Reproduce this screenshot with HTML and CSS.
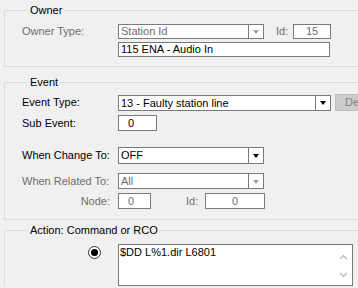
FILE: index.html
```html
<!DOCTYPE html>
<html lang="en">
  <head>
    <meta charset="UTF-8" />
    <title>Event Action</title>
    <link rel="stylesheet" href="styles.css">
  </head>
  <body>
    <fieldset class="group owner">
      <legend>Owner</legend>
      <div class="row">
        <span class="lbl dis">Owner Type:</span>
        <div class="combo dis w146">Station Id<span class="drop"><i class="arrow"></i></span></div>
        <span class="idlbl dis owner-id">Id:</span>
        <div class="box dis num w38">15</div>
      </div>
      <div class="row r2">
        <span class="lbl"></span>
        <div class="box w212">115 ENA - Audio In</div>
      </div>
    </fieldset>

    <fieldset class="group event">
      <legend>Event</legend>
      <div class="row">
        <span class="lbl">Event Type:</span>
        <div class="combo w213 h16">13 - Faulty station line<span class="drop"><i class="arrow"></i></span></div>
        <button class="btn" disabled>De</button>
      </div>
      <div class="row sub">
        <span class="lbl">Sub Event:</span>
        <div class="box w39 h16 pad0">0</div>
      </div>
      <div class="row change">
        <span class="lbl">When Change To:</span>
        <div class="combo w146 h17">OFF<span class="drop"><i class="arrow"></i></span></div>
      </div>
      <div class="row related">
        <span class="lbl dis">When Related To:</span>
        <div class="combo dis w146 h16">All<span class="drop"><i class="arrow"></i></span></div>
      </div>
      <div class="row node">
        <span class="lbl dis right">Node:</span>
        <div class="box dis w33 h16 pad0">0</div>
        <span class="idlbl dis node-id">Id:</span>
        <div class="box dis num w60 h16">0</div>
      </div>
    </fieldset>

    <fieldset class="group action">
      <legend>Action: Command or RCO</legend>
      <div class="row">
        <span class="lbl radio-cell"><span class="radio"></span></span>
        <div class="memo">
          <span class="memo-text">$DD L%1.dir L6801</span>
          <span class="scroll">
            <svg width="9" height="6" viewBox="0 0 9 6"><polyline points="1,5 4.5,1.5 8,5" fill="none" stroke="#b4b4b4" stroke-width="1.2"/></svg>
            <svg width="9" height="6" viewBox="0 0 9 6"><polyline points="1,1 4.5,4.5 8,1" fill="none" stroke="#b4b4b4" stroke-width="1.2"/></svg>
          </span>
        </div>
      </div>
    </fieldset>
  </body>
</html>
```

FILE: styles.css
```css
* {
  margin: 0;
  padding: 0;
  box-sizing: border-box;
}
body {
  width: 358px;
  height: 288px;
  overflow: hidden;
  background: #f0f0f0;
  color: #000;
  font: 11px/13px "Liberation Sans", Arial, sans-serif;
}
.group {
  border: 1px solid #dcdcdc;
  border-right: none;
  margin-left: 4px;
  width: 354px;
  min-width: 0;
  padding: 7px 0 9px 17px;
}
.group legend {
  margin-left: 6px;
  padding: 0 2px;
  line-height: 13px;
}
.owner {
  margin-top: 4px;
}
.event {
  margin-top: 9px;
  padding-top: 5px;
  padding-bottom: 10px;
}
.action {
  margin-top: 4px;
  padding-top: 7px;
  padding-bottom: 0;
  border-bottom: none;
}
.row {
  display: flex;
  align-items: center;
}
.r2 {
  margin-top: 3px;
}
.sub {
  margin-top: 4px;
}
.change {
  margin-top: 16px;
}
.related {
  margin-top: 9px;
}
.node {
  margin-top: 4px;
}
.lbl {
  width: 96px;
  flex: none;
}
.lbl.right {
  text-align: right;
  padding-right: 8px;
}
.dis {
  color: #6d6d6d;
}
.box,
.combo {
  position: relative;
  height: 15px;
  line-height: 13px;
  border: 1px solid #7a7a7a;
  background: #fff;
  padding-left: 2px;
  white-space: nowrap;
  overflow: hidden;
  flex: none;
}
.h16 {
  height: 16px;
  line-height: 14px;
}
.h17 {
  height: 17px;
  line-height: 15px;
}
.pad0 {
  padding-left: 9px;
}
.num {
  text-align: center;
  padding-left: 0;
}
.w33 { width: 33px; }
.w38 { width: 38px; }
.w39 { width: 39px; }
.w60 { width: 60px; }
.w146 { width: 146px; }
.w212 { width: 212px; }
.w213 { width: 213px; }
.drop {
  position: absolute;
  top: 0;
  right: 0;
  bottom: 0;
  width: 15px;
  border-left: 1px solid #7a7a7a;
  background: #fff;
  display: flex;
  align-items: center;
  justify-content: center;
}
.arrow {
  width: 0;
  height: 0;
  border-left: 3px solid transparent;
  border-right: 3px solid transparent;
  border-top: 4px solid #000;
  margin-top: 1px;
}
.dis .arrow {
  border-top-color: #a0a0a0;
}
.idlbl {
  flex: none;
}
.owner-id {
  margin-left: 12px;
  width: 17px;
}
.node-id {
  margin-left: 35px;
  width: 19px;
}
.btn {
  margin-left: 4px;
  width: 23px;
  height: 17px;
  border: 1px solid #bfbfbf;
  border-right: none;
  background: #cccccc;
  color: #838383;
  font: inherit;
  text-align: left;
  padding-left: 9px;
  overflow: hidden;
  white-space: nowrap;
  flex: none;
}
.radio-cell {
  display: flex;
  justify-content: flex-end;
  align-self: flex-start;
  padding: 2px 17px 0 0;
}
.radio {
  width: 13px;
  height: 13px;
  border: 1px solid #333;
  border-radius: 50%;
  background: #fff;
  display: flex;
  align-items: center;
  justify-content: center;
}
.radio::after {
  content: "";
  width: 7px;
  height: 7px;
  border-radius: 50%;
  background: #000;
}
.memo {
  display: flex;
  width: 235px;
  height: 42px;
  border: 1px solid #7a7a7a;
  background: #fff;
  flex: none;
}
.memo-text {
  flex: 1;
  padding: 1px 0 0 1px;
}
.scroll {
  width: 17px;
  display: flex;
  flex-direction: column;
  justify-content: space-between;
  align-items: center;
  padding: 9px 0 7px;
}
```
